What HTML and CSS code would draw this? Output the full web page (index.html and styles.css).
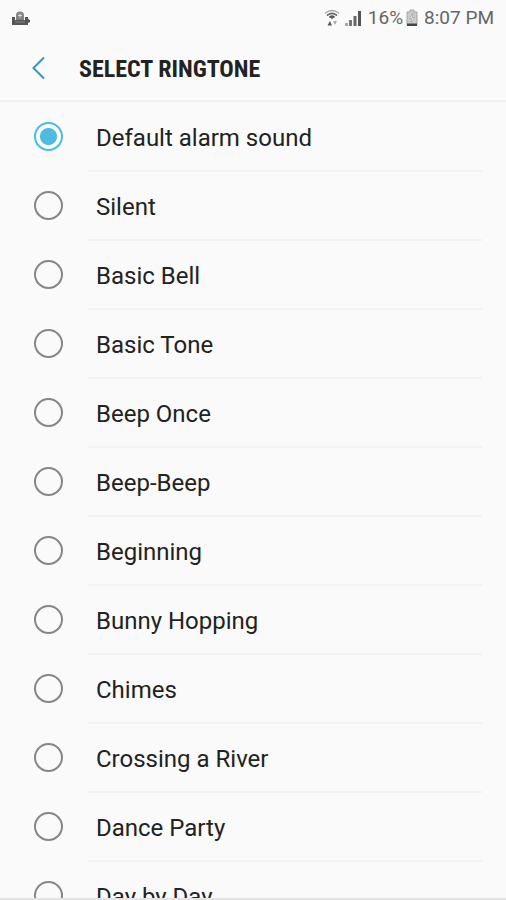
FILE: index.html
```
<!DOCTYPE html>
<html lang="en">
<head>
<meta charset="utf-8">
<meta name="viewport" content="width=device-width, initial-scale=1">
<title>Select ringtone</title>
<link rel="stylesheet" href="styles.css">
</head>
<body>
<div class="screen">
  <div class="status">
    <svg class="notice" width="20" height="16" viewBox="0 0 20 16" aria-hidden="true">
      <path d="M0 7h3v3h10V7h3v2l2 1v2l-2 1v2H0z" fill="#555"/>
      <path d="M4 10V5.500a4 4 0 0 1 8 0V10z" fill="#858585"/>
      <path d="M8 3.500v4M6 5.500h4" stroke="#ddd" stroke-width="1"/>
      <path d="M3 12h10" stroke="#888" stroke-width="1"/>
    </svg>
    <div class="indicators">
      <svg class="wifi" width="16" height="18" viewBox="0 0 16 18" aria-hidden="true">
        <g fill="none" stroke-linecap="round">
          <path d="M1.500 4Q8-1 14.500 4" stroke="#a5a5a5" stroke-width="1.300"/>
          <path d="M3.500 6.200Q8 2.500 12.500 6.200" stroke="#666" stroke-width="1.500"/>
          <path d="M6 8Q8 6.500 10 8" stroke="#555" stroke-width="1.800"/>
        </g>
        <path d="M8 10.500L6 8h4z" fill="#666"/>
        <path d="M3.500 16.500L6 12l2 4.500z" fill="#555"/>
        <path d="M9 12h4l-2 4z" fill="#aaa"/>
      </svg>
      <svg class="signal" width="18" height="18" viewBox="0 0 18 18" aria-hidden="true">
        <path d="M1 14h3v3H1z" fill="#aaa"/>
        <path d="M5 11h3v6H5z" fill="#777"/>
        <path d="M9.500 7h3v10h-3z" fill="#666"/>
        <path d="M14 2h3v15h-3z" fill="#555"/>
      </svg>
      <span class="level">16%</span>
      <svg class="battery" width="12" height="18" viewBox="0 0 12 18" aria-hidden="true">
        <path d="M4 1h4v2h3v13H1V3h3z" fill="#ccc" stroke="#a4a4a4"/>
        <path d="M7 4.500L3.500 9.500h2.300L5 13.500l3.500-5H6z" fill="#f8f8f8" stroke="#888" stroke-width=".5"/>
        <path d="M1 14.500h10V17H1z" fill="#444"/>
      </svg>
      <time class="clock">8:07 PM</time>
    </div>
  </div>
  <header class="bar">
    <button class="back" type="button" aria-label="Back">
      <svg width="14" height="24" viewBox="0 0 14 24" aria-hidden="true"><path d="M12 1.500L1.500 12 12 22.500" fill="none" stroke="#3199bd" stroke-width="2"/></svg>
    </button>
    <h1 class="title">SELECT RINGTONE</h1>
  </header>
  <main class="list">
    <label class="row"><input type="radio" name="tone" checked><span class="name">Default alarm sound</span></label>
    <label class="row"><input type="radio" name="tone"><span class="name">Silent</span></label>
    <label class="row"><input type="radio" name="tone"><span class="name">Basic Bell</span></label>
    <label class="row"><input type="radio" name="tone"><span class="name">Basic Tone</span></label>
    <label class="row"><input type="radio" name="tone"><span class="name">Beep Once</span></label>
    <label class="row"><input type="radio" name="tone"><span class="name">Beep-Beep</span></label>
    <label class="row"><input type="radio" name="tone"><span class="name">Beginning</span></label>
    <label class="row"><input type="radio" name="tone"><span class="name">Bunny Hopping</span></label>
    <label class="row"><input type="radio" name="tone"><span class="name">Chimes</span></label>
    <label class="row"><input type="radio" name="tone"><span class="name">Crossing a River</span></label>
    <label class="row"><input type="radio" name="tone"><span class="name">Dance Party</span></label>
    <label class="row"><input type="radio" name="tone"><span class="name">Day by Day</span></label>
  </main>
</div>
</body>
</html>
```
FILE: styles.css
```
* { box-sizing: border-box; }

body {
  margin: 0;
  background: #fafafa;
  color: #222;
  font-family: Roboto, "Liberation Sans", sans-serif;
}

.screen {
  display: flex;
  flex-direction: column;
  height: 100vh;
  border-bottom: 2px solid #e4e4e4;
  overflow: hidden;
}

.status {
  display: flex;
  flex: none;
  align-items: center;
  justify-content: space-between;
  height: 36px;
  padding: 0 12px;
  color: #666;
  font-size: 19px;
  line-height: 36px;
}

.indicators {
  display: flex;
  align-items: center;
}

.signal { margin: 0 6px 0 4px; }
.battery { margin: 0 6px 0 3px; }

.bar {
  display: flex;
  flex: none;
  align-items: center;
  height: 66px;
  padding-left: 24px;
  border-bottom: 2px solid #f0f0f0;
}

.back {
  display: flex;
  align-items: center;
  justify-content: center;
  width: 30px;
  height: 48px;
  margin-right: 25px;
  padding: 0;
  border: 0;
  background: none;
}

.title {
  margin: 0;
  padding-top: 2px;
  font-family: "Roboto Condensed", Roboto, sans-serif;
  font-size: 24px;
  font-weight: 700;
  line-height: 32px;
}

.list {
  flex: 1;
  min-height: 0;
  padding-top: 1px;
  overflow: hidden;
}

.row {
  display: flex;
  align-items: center;
  height: 69px;
  padding: 0 24px 0 34px;
}

.row input {
  flex: none;
  width: 29px;
  height: 29px;
  margin: 0 25px 2px 0;
  border: 2px solid #868686;
  border-radius: 50%;
  background: #fafafa;
  appearance: none;
}

.row input:checked {
  border-color: #4dbbe2;
  background: radial-gradient(circle, #4dbbe2 8px, #fafafa 9px);
}

.name {
  flex: 1;
  padding: 4px 8px 0;
  border-bottom: 2px solid #f3f3f3;
  font-size: 24px;
  line-height: 63px;
}
```
